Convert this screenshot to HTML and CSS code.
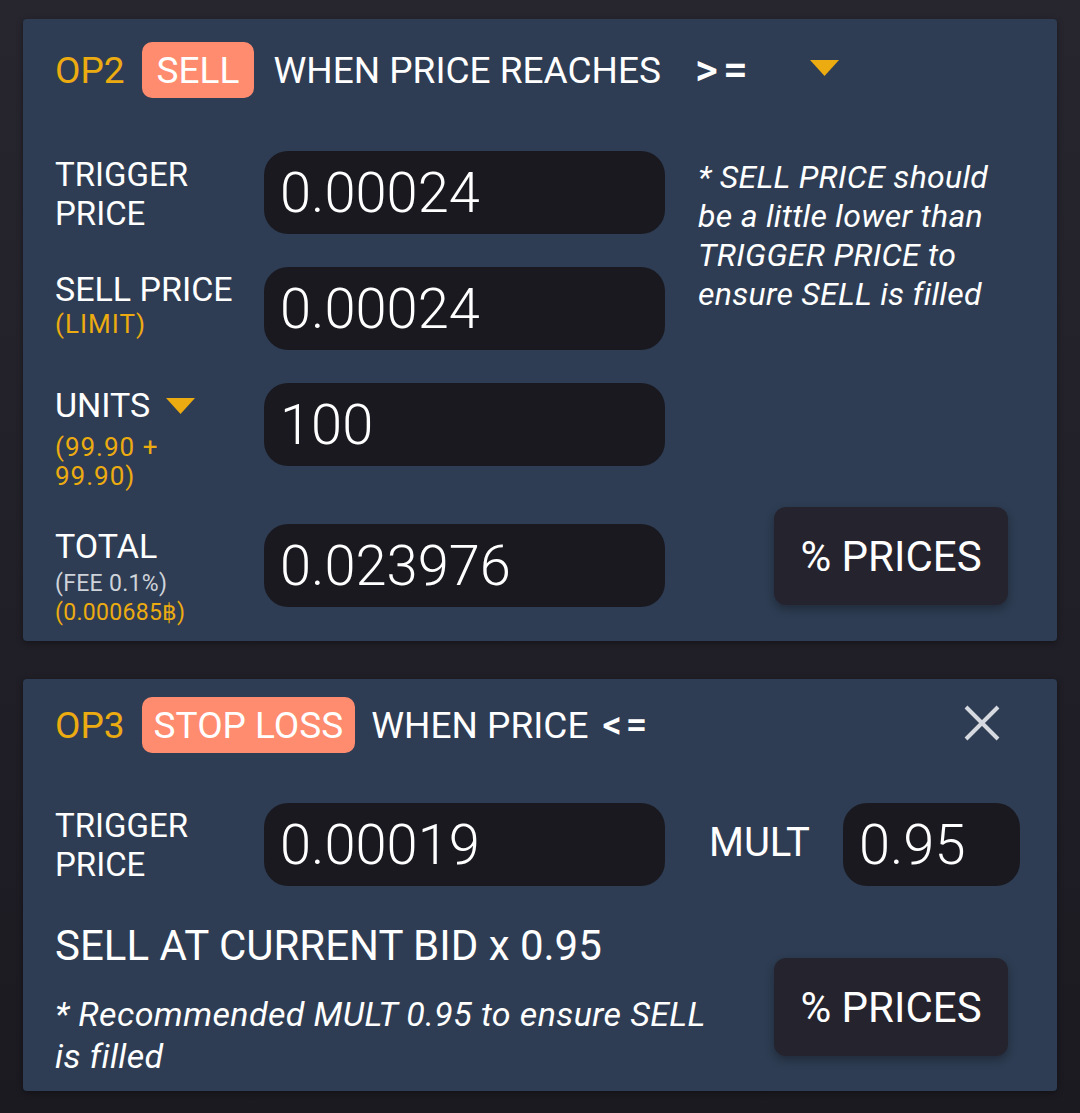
FILE: index.html
```html
<!DOCTYPE html>
<html lang="en">
<head>
<meta charset="utf-8">
<title>Orders</title>
<link rel="stylesheet" href="styles.css">
</head>
<body>
<div class="page">
  <section class="card card-sell">
    <header class="op-head">
      <span class="op-id">OP2</span>
      <span class="badge badge-sell">SELL</span>
      <span class="head-text">WHEN PRICE REACHES</span>
      <span class="cmp cmp-ge">&gt;=</span>
      <svg class="caret caret-head" width="29" height="16" viewBox="0 0 29 16"><path d="M0 0H29L14.5 16Z" fill="#ecab10"/></svg>
    </header>
    <div class="form-grid">
      <div class="label label-first">TRIGGER<br>PRICE</div>
      <div class="field">0.00024</div>
      <p class="note note-sell">* SELL PRICE should be a little lower than TRIGGER PRICE to ensure SELL is filled</p>

      <div class="label">SELL PRICE<span class="sub yellow sub-limit">(LIMIT)</span></div>
      <div class="field">0.00024</div>

      <div class="label"><span class="units">UNITS<svg class="caret" width="29" height="16" viewBox="0 0 29 16"><path d="M0 0H29L14.5 16Z" fill="#ecab10"/></svg></span><span class="sub yellow sub-units">(99.90 +<br>99.90)</span></div>
      <div class="field">100</div>

      <div class="label">TOTAL<span class="sub gray sub-fee sub-fee-first">(FEE 0.1%)</span><span class="sub yellow sub-fee">(0.000685฿)</span></div>
      <div class="field">0.023976</div>
      <button class="btn btn-grid">% PRICES</button>
    </div>
  </section>

  <section class="card card-stop">
    <header class="op-head op-head-stop">
      <span class="op-id">OP3</span>
      <span class="badge">STOP LOSS</span>
      <span class="head-text head-text-stop">WHEN PRICE</span>
      <span class="cmp cmp-le">&lt;=</span>
      <svg class="close" width="36" height="36" viewBox="0 0 36 36"><path d="M2 2L34 34M34 2L2 34" stroke="#d6dae0" stroke-width="4"/></svg>
    </header>
    <div class="stop-row">
      <div class="label label-first">TRIGGER<br>PRICE</div>
      <div class="field">0.00019</div>
      <div class="mult-label">MULT</div>
      <div class="field field-mult">0.95</div>
    </div>
    <div class="stop-bottom">
      <div class="stop-text">
        <div class="sell-at">SELL AT CURRENT BID x 0.95</div>
        <p class="note note-stop">* Recommended MULT 0.95 to ensure SELL is filled</p>
      </div>
      <button class="btn btn-stop">% PRICES</button>
    </div>
  </section>
</div>
</body>
</html>
```

FILE: styles.css
```css
* { box-sizing: border-box; }

html, body {
  margin: 0;
  height: 100%;
}

body {
  background: linear-gradient(180deg, #27262f 0%, #1b1a21 100%);
  font-family: Roboto, "Noto Sans", "DejaVu Sans", sans-serif;
  color: #ffffff;
}

.page {
  padding: 19px 23px 0 23px;
  display: flex;
  flex-direction: column;
  gap: 38px;
}

.card {
  background: #2e3d53;
  border-radius: 4px;
  box-shadow: 0 2px 6px rgba(0, 0, 0, 0.35);
}

.card-sell {
  height: 622px;
  padding: 23px 49px 0 32px;
}

.card-stop {
  height: 412px;
  padding: 18px 32px 0 32px;
}

/* header */
.op-head {
  display: flex;
  align-items: center;
  height: 56px;
  margin-bottom: 53px;
}

.op-id {
  color: #ecab10;
  font-size: 37px;
  margin-right: 17px;
}

.badge {
  background: #ff8c6f;
  border-radius: 10px;
  height: 56px;
  padding: 0 12px;
  display: flex;
  align-items: center;
  font-size: 37px;
  margin-right: 20px;
}

.badge-sell {
  padding: 0 15px;
  margin-right: 19px;
}

.head-text {
  font-size: 37px;
}

.head-text-stop {
  margin-left: -4px;
}

.cmp {
  font-size: 44px;
  font-weight: 500;
  letter-spacing: 5px;
}

.cmp-ge { margin-left: 34px; }
.cmp-le { margin-left: 14px; font-size: 38px; letter-spacing: 4px; }

.caret-head { margin-left: 57px; margin-top: -4px; }

.close { margin-left: auto; margin-right: 25px; margin-top: -4px; }

.op-head-stop { margin-bottom: 50px; }

/* form grid */
.form-grid {
  display: grid;
  grid-template-columns: 176px 401px 1fr;
  column-gap: 33px;
  row-gap: 33px;
  align-items: start;
}

.label {
  font-size: 34px;
  line-height: 36px;
  white-space: nowrap;
  padding-top: 4px;
  display: flex;
  flex-direction: column;
}

.label-first {
  display: block;
  font-size: 33px;
  line-height: 39px;
  padding-top: 4px;
}

.sub {
  font-size: 26px;
  line-height: 29px;
  letter-spacing: 1px;
}

.sub-limit { margin-top: 3px; }

.sub-units { margin-top: 10px; }

.sub-fee {
  font-size: 23px;
  letter-spacing: 0.3px;
}

.sub-fee-first { margin-top: 5px; }

.yellow { color: #ecab10; }
.gray { color: #cfd3da; }

.units {
  display: flex;
  align-items: center;
  gap: 16px;
}

.units .caret { margin-top: 2px; }

.field {
  background: #1a1920;
  border-radius: 24px;
  height: 83px;
  padding-left: 16px;
  display: flex;
  align-items: center;
  font-size: 56px;
  font-weight: 300;
}

.note {
  margin: 0;
  font-style: italic;
  color: #ffffff;
}

.note-sell {
  margin-top: 7px;
  grid-row: 1 / span 3;
  grid-column: 3;
  width: 305px;
  font-size: 32px;
  letter-spacing: 0.3px;
  line-height: 39px;
}

.btn {
  background: #25242e;
  color: #ffffff;
  border: none;
  border-radius: 12px;
  width: 234px;
  height: 98px;
  font-family: inherit;
  font-size: 42px;
  box-shadow: 0 4px 10px rgba(0, 0, 0, 0.3);
  padding: 0;
}

.btn-grid {
  grid-column: 3;
  grid-row: 4;
  justify-self: end;
  margin-top: -17px;
}

/* stop loss */
.stop-row {
  display: flex;
  align-items: center;
}

.stop-row .label {
  width: 176px;
  margin-right: 33px;
  padding-top: 0;
}

.stop-row .field {
  width: 401px;
}

.mult-label {
  font-size: 40px;
  margin-left: 44px;
  margin-right: 33px;
  margin-top: -4px;
}

.stop-row .field-mult {
  width: 177px;
}

.stop-bottom {
  display: flex;
  justify-content: space-between;
  align-items: flex-start;
  padding-right: 17px;
  margin-top: 36px;
}

.stop-text {
  width: 672px;
}

.sell-at {
  font-size: 42px;
  line-height: 48px;
}

.note-stop {
  margin-top: 23px;
  font-size: 34px;
  letter-spacing: 0.4px;
  line-height: 42px;
}

.btn-stop {
  margin-top: 36px;
}
```
